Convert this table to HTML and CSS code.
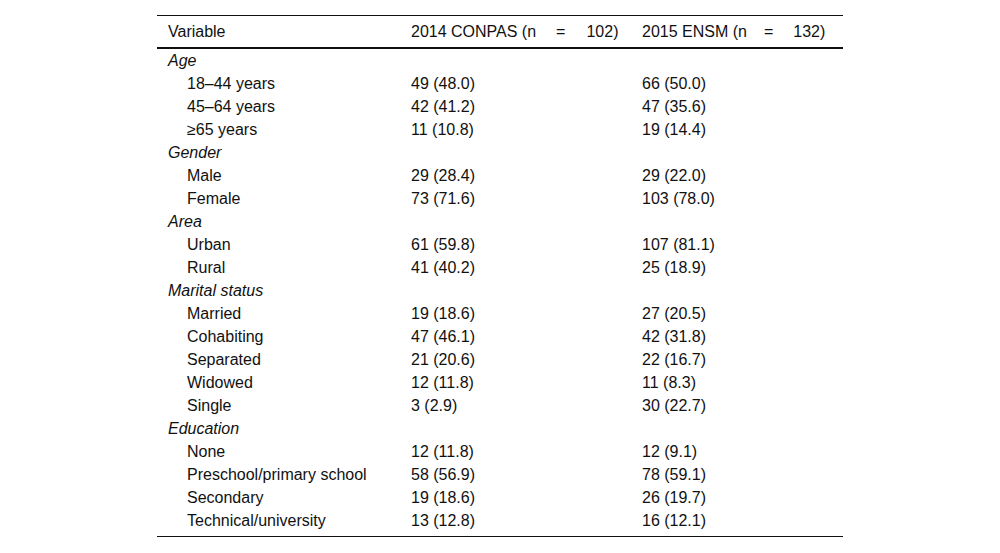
FILE: index.html
```html
<!DOCTYPE html>
<html>
<head>
<meta charset="utf-8">
<link rel="stylesheet" href="styles.css">
</head>
<body>
<div class="wrap">
<table class="data">
  <colgroup>
    <col class="c1"><col class="c2"><col class="c3">
  </colgroup>
  <thead>
    <tr><th>Variable</th><th>2014 CONPAS (n<span class="eq eq-a">=</span>102)</th><th>2015 ENSM (n<span class="eq">=</span>132)</th></tr>
  </thead>
  <tbody>
    <tr class="grp"><td>Age</td><td></td><td></td></tr>
    <tr><td class="sub">18–44 years</td><td>49 (48.0)</td><td>66 (50.0)</td></tr>
    <tr><td class="sub">45–64 years</td><td>42 (41.2)</td><td>47 (35.6)</td></tr>
    <tr><td class="sub">≥65 years</td><td>11 (10.8)</td><td>19 (14.4)</td></tr>
    <tr class="grp"><td>Gender</td><td></td><td></td></tr>
    <tr><td class="sub">Male</td><td>29 (28.4)</td><td>29 (22.0)</td></tr>
    <tr><td class="sub">Female</td><td>73 (71.6)</td><td>103 (78.0)</td></tr>
    <tr class="grp"><td>Area</td><td></td><td></td></tr>
    <tr><td class="sub">Urban</td><td>61 (59.8)</td><td>107 (81.1)</td></tr>
    <tr><td class="sub">Rural</td><td>41 (40.2)</td><td>25 (18.9)</td></tr>
    <tr class="grp"><td>Marital status</td><td></td><td></td></tr>
    <tr><td class="sub">Married</td><td>19 (18.6)</td><td>27 (20.5)</td></tr>
    <tr><td class="sub">Cohabiting</td><td>47 (46.1)</td><td>42 (31.8)</td></tr>
    <tr><td class="sub">Separated</td><td>21 (20.6)</td><td>22 (16.7)</td></tr>
    <tr><td class="sub">Widowed</td><td>12 (11.8)</td><td>11 (8.3)</td></tr>
    <tr><td class="sub">Single</td><td>3 (2.9)</td><td>30 (22.7)</td></tr>
    <tr class="grp"><td>Education</td><td></td><td></td></tr>
    <tr><td class="sub">None</td><td>12 (11.8)</td><td>12 (9.1)</td></tr>
    <tr><td class="sub">Preschool/primary school</td><td>58 (56.9)</td><td>78 (59.1)</td></tr>
    <tr><td class="sub">Secondary</td><td>19 (18.6)</td><td>26 (19.7)</td></tr>
    <tr class="last"><td class="sub">Technical/university</td><td>13 (12.8)</td><td>16 (12.1)</td></tr>
  </tbody>
</table>
</div>
</body>
</html>
```
FILE: styles.css
```css
html, body {
  margin: 0;
  padding: 0;
  background: #fff;
}
body {
  font-family: "Liberation Sans", Arial, sans-serif;
  font-size: 16px;
  color: #111;
}
.wrap {
  display: flex;
  justify-content: center;
  padding-top: 15px;
}
.data {
  width: 686px;
  border-collapse: collapse;
  table-layout: fixed;
  border-top: 1px solid #111;
  border-bottom: 1px solid #111;
}
.c1 { width: 243px; }
.c2 { width: 231px; }
.c3 { width: 212px; }
.data th {
  font-weight: normal;
  text-align: left;
  height: 31px;
  padding: 0 0 0 11px;
  line-height: 31px;
  border-bottom: 2px solid #111;
  white-space: nowrap;
}
.data td {
  height: 23px;
  padding: 0 0 0 11px;
  line-height: 23px;
  white-space: nowrap;
}
.data tr.grp td:first-child {
  font-style: italic;
}
.data td.sub {
  padding-left: 30px;
}
.data tr.last td {
  height: 27px;
  vertical-align: top;
}
.eq {
  margin: 0 20px 0 17px;
}
.eq-a {
  margin: 0 21px 0 20px;
}
```
